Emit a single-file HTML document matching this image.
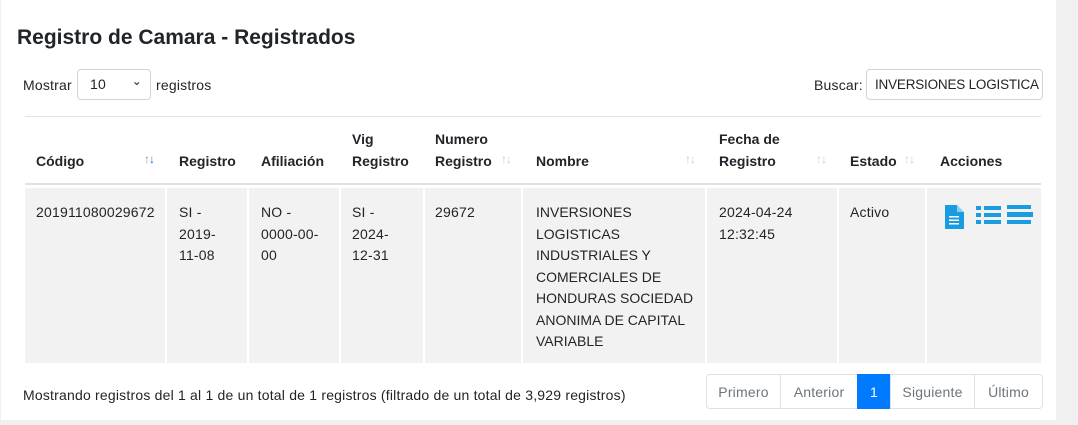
<!DOCTYPE html>
<html><head><meta charset="utf-8"><style>
body{margin:0;width:1078px;height:425px;background:#f0f0f0;font-family:"Liberation Sans",sans-serif;font-size:14px;color:#212529;position:relative;overflow:hidden;letter-spacing:0.2px}
.card{position:absolute;left:1px;top:0;width:1055px;height:420px;background:#fff}
.a{position:absolute;white-space:nowrap}
h1{position:absolute;left:16px;top:26px;margin:0;font-size:21px;font-weight:bold;color:#212529;letter-spacing:0}
.sel{position:absolute;left:76px;top:69px;width:74px;height:31px;border:1px solid #ced4da;border-radius:4px;box-sizing:border-box;padding:6px 12px;font-size:14px}
.inp{position:absolute;left:865px;top:69px;width:177px;height:31px;border:1px solid #ced4da;border-radius:4px;box-sizing:border-box;padding:7px 8px;font-size:13.5px;white-space:nowrap;overflow:hidden;letter-spacing:-0.2px}
.th{position:absolute;font-weight:bold;line-height:21.5px;bottom:0;letter-spacing:0}
.col{position:absolute;top:188px;height:175px;background:#f2f2f2}
.td{position:absolute;top:202px;line-height:21.5px;white-space:nowrap}
.sort{position:absolute;top:152px;color:#ccc;font-size:12px;letter-spacing:-1px}
.pg{position:absolute;top:374px;height:35px;border:1px solid #dee2e6;box-sizing:border-box;color:#6c757d;line-height:35px;text-align:center;font-size:14px}
</style></head><body>
<div class="card">
<h1>Registro de Camara - Registrados</h1>
<div class="a" style="left:22px;top:77px">Mostrar</div>
<div class="sel">10<span style="position:absolute;right:8px;top:4px;font-size:12px">&#8964;</span></div>
<div class="a" style="left:155px;top:77px">registros</div>
<div class="a" style="left:813px;top:77px">Buscar:</div>
<div class="inp">INVERSIONES LOGISTICA</div>

<div class="a" style="left:24px;top:116px;width:1016px;height:1px;background:#dee2e6"></div>
<div class="a" style="left:24px;top:183px;width:1016px;height:2px;background:#dee2e6"></div>

<div class="a" style="left:0;top:116px;width:1056px;height:56px">
<div class="th" style="left:35px">Código</div>
<div class="th" style="left:178px">Registro</div>
<div class="th" style="left:260px">Afiliación</div>
<div class="th" style="left:351px">Vig<br>Registro</div>
<div class="th" style="left:434px">Numero<br>Registro</div>
<div class="th" style="left:535px">Nombre</div>
<div class="th" style="left:718px">Fecha de<br>Registro</div>
<div class="th" style="left:849px">Estado</div>
<div class="th" style="left:939px">Acciones</div>
</div>
<div class="sort" style="left:143px;color:#999">↑<span style="color:#1a73c8">↓</span></div>
<div class="sort" style="left:500px">↑↓</div>
<div class="sort" style="left:684px">↑↓</div>
<div class="sort" style="left:815px">↑↓</div>
<div class="sort" style="left:903px">↑↓</div>

<div class="col" style="left:24px;width:140px"></div>
<div class="col" style="left:166px;width:80px"></div>
<div class="col" style="left:248px;width:90px"></div>
<div class="col" style="left:340px;width:82px"></div>
<div class="col" style="left:424px;width:96px"></div>
<div class="col" style="left:522px;width:182px"></div>
<div class="col" style="left:706px;width:130px"></div>
<div class="col" style="left:838px;width:86px"></div>
<div class="col" style="left:926px;width:114px"></div>

<div class="td" style="left:35px">201911080029672</div>
<div class="td" style="left:178px">SI -<br>2019-<br>11-08</div>
<div class="td" style="left:260px">NO -<br>0000-00-<br>00</div>
<div class="td" style="left:351px">SI -<br>2024-<br>12-31</div>
<div class="td" style="left:434px">29672</div>
<div class="td" style="left:535px;letter-spacing:0">INVERSIONES<br>LOGISTICAS<br>INDUSTRIALES Y<br>COMERCIALES DE<br>HONDURAS SOCIEDAD<br>ANONIMA DE CAPITAL<br>VARIABLE</div>
<div class="td" style="left:718px">2024-04-24<br>12:32:45</div>
<div class="td" style="left:849px">Activo</div>
<svg class="a" style="left:943px;top:204px" width="90" height="26" viewBox="0 0 90 26">
<path d="M1 1h12l7 7v17H1z" fill="#1a9de0"/><path d="M13 1v7h7" fill="#fff" opacity=".5"/>
<rect x="5" y="12" width="10" height="1.5" fill="#fff"/><rect x="5" y="15.5" width="10" height="1.5" fill="#fff"/><rect x="5" y="19" width="10" height="1.5" fill="#fff"/>
<rect x="32" y="2" width="5" height="4" fill="#1a9de0"/><rect x="40" y="2" width="17" height="4" fill="#1a9de0"/>
<rect x="32" y="9" width="5" height="4" fill="#1a9de0"/><rect x="40" y="9" width="17" height="4" fill="#1a9de0"/>
<rect x="32" y="16" width="5" height="4" fill="#1a9de0"/><rect x="40" y="16" width="17" height="4" fill="#1a9de0"/>
<rect x="63" y="1" width="24" height="4" fill="#1a9de0"/><rect x="63" y="8" width="26" height="5" fill="#1a9de0"/><rect x="63" y="16" width="24" height="4" fill="#1a9de0"/>
</svg>

<div class="a" style="left:22px;top:387px">Mostrando registros del 1 al 1 de un total de 1 registros (filtrado de un total de 3,929 registros)</div>
<div class="pg" style="left:705px;width:75px;border-radius:4px 0 0 4px">Primero</div>
<div class="pg" style="left:779px;width:78px">Anterior</div>
<div class="pg" style="left:856px;width:34px;background:#007bff;border-color:#007bff;color:#fff">1</div>
<div class="pg" style="left:889px;width:85px">Siguiente</div>
<div class="pg" style="left:973px;width:69px;border-radius:0 4px 4px 0">Último</div>
</div>
</body></html>
